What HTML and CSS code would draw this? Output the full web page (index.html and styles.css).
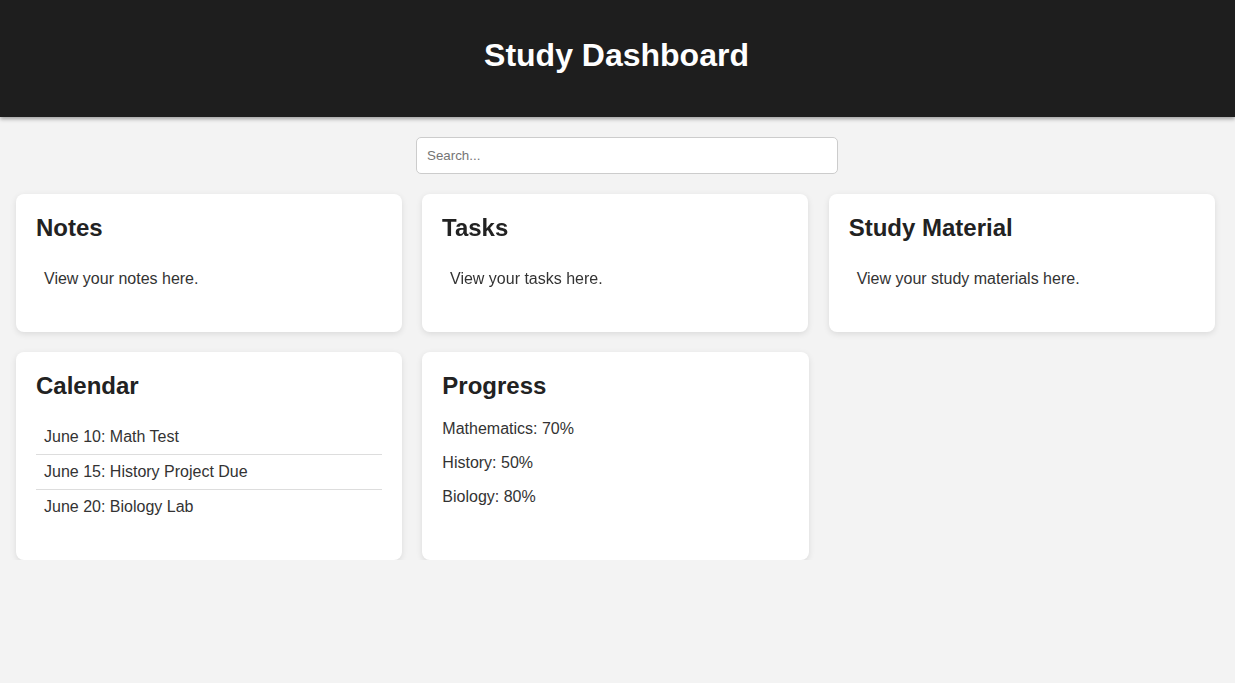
FILE: index.html
```html
<!DOCTYPE html>
<html lang="en">
<head>
<meta charset="utf-8">
<title>Study Dashboard</title>
<link rel="stylesheet" href="styles.css">
</head>
<body>
<header class="topbar">
  <h1 class="topbar-title">Study Dashboard</h1>
</header>
<div class="search-row">
  <input class="search-input" type="text" placeholder="Search...">
</div>
<main class="grid">
  <section class="card">
    <h2 class="card-title">Notes</h2>
    <ul class="card-list">
      <li>View your notes here.</li>
    </ul>
  </section>
  <section class="card card-soft">
    <h2 class="card-title">Tasks</h2>
    <ul class="card-list">
      <li>View your tasks here.</li>
    </ul>
  </section>
  <section class="card">
    <h2 class="card-title">Study Material</h2>
    <ul class="card-list">
      <li>View your study materials here.</li>
    </ul>
  </section>
  <section class="card">
    <h2 class="card-title">Calendar</h2>
    <ul class="card-list">
      <li>June 10: Math Test</li>
      <li>June 15: History Project Due</li>
      <li>June 20: Biology Lab</li>
    </ul>
  </section>
  <section class="card">
    <h2 class="card-title">Progress</h2>
    <p class="card-text">Mathematics: 70%</p>
    <p class="card-text">History: 50%</p>
    <p class="card-text">Biology: 80%</p>
  </section>
</main>
</body>
</html>
```

FILE: styles.css
```css
html, body {
  margin: 0;
  padding: 0;
}

body {
  background: #f3f3f3;
  font-family: "Liberation Sans", Arial, sans-serif;
  color: #333;
}

.topbar {
  background: #1e1e1e;
  padding: 37px 20px 43px;
  box-shadow: 0 2px 4px rgba(0, 0, 0, 0.35);
  text-align: center;
}

.topbar-title {
  margin: 0 0 0 -2px;
  color: #fff;
  font-size: 32px;
  line-height: 37px;
  font-weight: bold;
}

.search-row {
  display: flex;
  justify-content: center;
  padding: 20px 0 20px 19px;
}

.search-input {
  width: 400px;
  padding: 10px;
  border: 1px solid #ccc;
  border-radius: 5px;
  background: #fff;
  font-family: "Liberation Sans", Arial, sans-serif;
  font-size: 13.333px;
  line-height: 15px;
  color: #333;
  outline: none;
}

.search-input::placeholder {
  color: #757575;
}

.grid {
  display: grid;
  grid-template-columns: repeat(3, 1fr);
  gap: 20px;
  padding: 0 20px 0 16px;
}

.card {
  background: #fff;
  border-radius: 8px;
  padding: 20px;
  box-shadow: 0 2px 6px rgba(0, 0, 0, 0.1);
}

.card-soft {
  will-change: transform;
}

.card-title {
  margin: 0 0 0.83em;
  font-size: 24px;
  font-weight: bold;
  color: #222;
}

.card-list {
  list-style: none;
  margin: 16px 0;
  padding: 0;
}

.card-list li {
  padding: 8px;
  font-size: 16px;
  line-height: 18px;
  border-bottom: 1px solid #ddd;
}

.card-list li:last-child {
  border-bottom: none;
}

.card-text {
  margin: 16px 0;
  font-size: 16px;
  line-height: 18px;
}
```
